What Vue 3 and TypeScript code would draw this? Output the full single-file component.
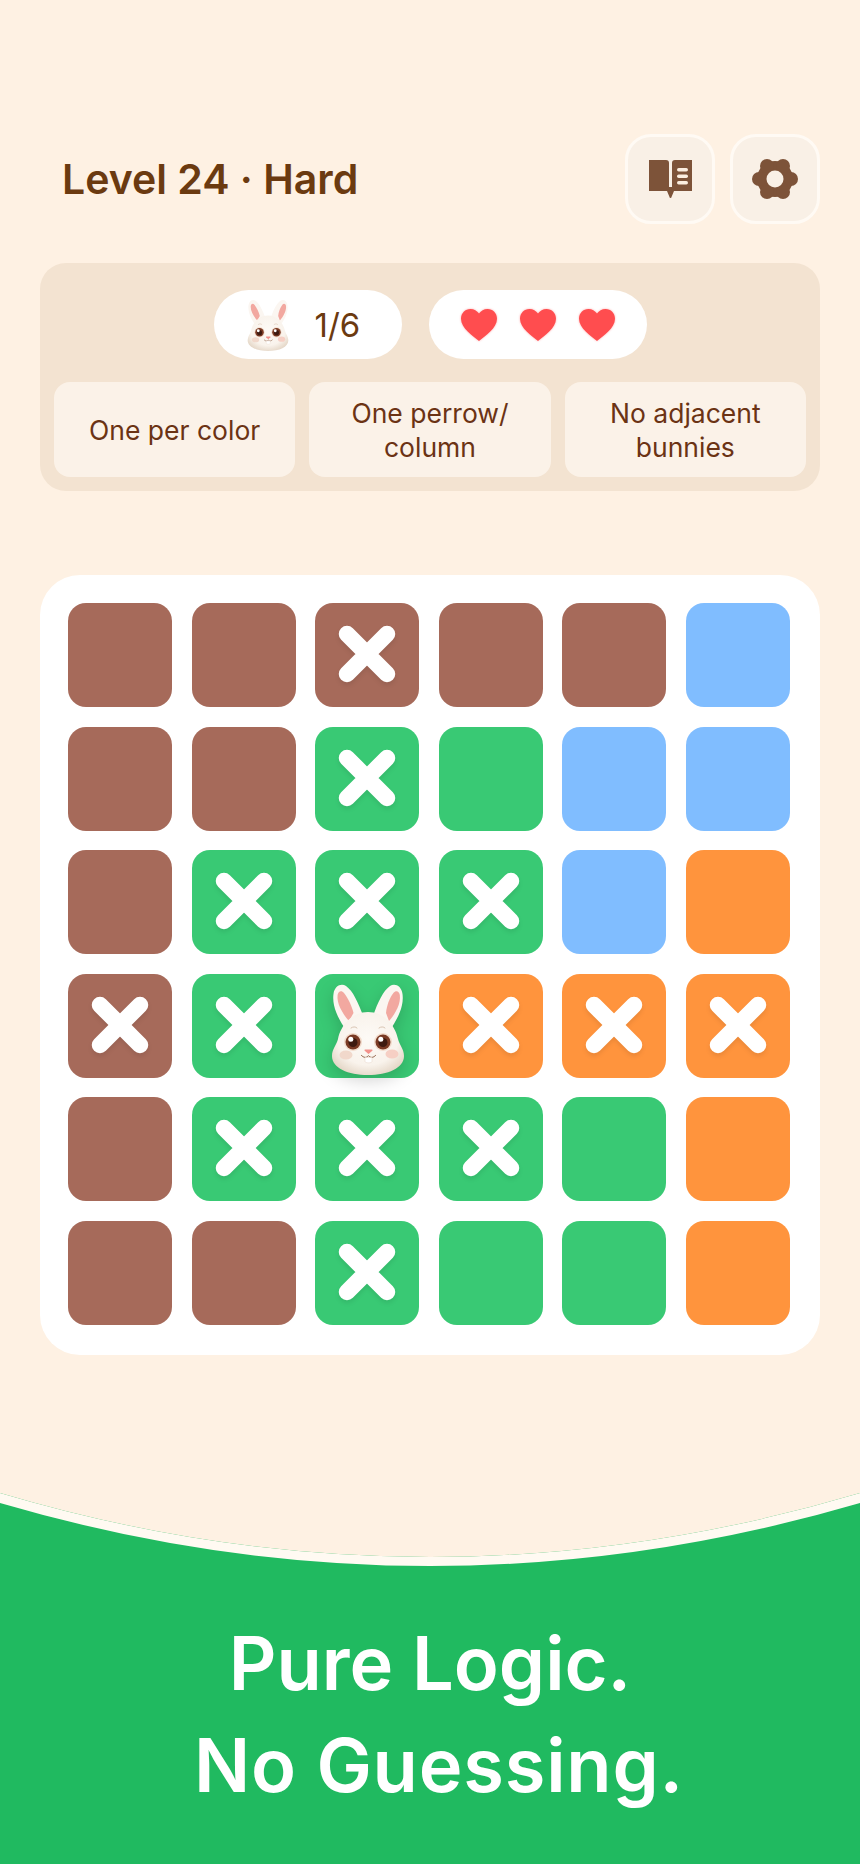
<script setup lang="ts">
type Cell = { c: string; m: string }
const layout = [
  ['b', 'b', 'bx', 'b', 'b', 'l'],
  ['b', 'b', 'gx', 'g', 'l', 'l'],
  ['b', 'gx', 'gx', 'gx', 'l', 'o'],
  ['bx', 'gx', 'gr', 'ox', 'ox', 'ox'],
  ['b', 'gx', 'gx', 'gx', 'g', 'o'],
  ['b', 'b', 'gx', 'g', 'g', 'o'],
]
const cells: Cell[] = layout.flat().map((s) => ({ c: s[0], m: s[1] ?? '' }))
const rules = ['One per color', 'One perrow/ column', 'No adjacent bunnies']
const lobes = [60, 120, 180, 240, 300, 360].map((a) => ({
  x: 23 + 16 * Math.cos((a * Math.PI) / 180),
  y: 22 + 15 * Math.sin((a * Math.PI) / 180),
}))
</script>

<template>
  <main class="page">
    <svg width="0" height="0" class="defs" aria-hidden="true">
      <defs>
        <radialGradient id="fur" cx="50%" cy="42%" r="62%">
          <stop offset="0%" stop-color="#fdfaf6" />
          <stop offset="68%" stop-color="#f9f3ec" />
          <stop offset="100%" stop-color="#e4d6c6" />
        </radialGradient>
        <symbol id="bunny" viewBox="0 0 72 92">
          <path d="M12 44C5 33 0 22 1.500 11 2.500 3 9 0 14 3c7 5 12 16 18 32z" fill="#fbf6f1" />
          <path d="M60 44c7-11 12-22 10.500-33C69.500 3 63 0 58 3c-7 5-12 16-17 30z" fill="#fbf6f1" />
          <path d="M17 38C10 30 4.500 20 5.600 12c.6-4 4-5 6.400-2 4 5 8 13 9.500 20z" fill="#f2a8a0" />
          <path d="M57 38c7-8 12-18 10.800-26-.6-4-4-5-6.400-2-4 5-6.800 13-7.400 20z" fill="#f2a8a0" />
          <path d="M36 29C20 29 9 42 6 56c-1.500 6-6 10-6 17 0 12 16 19 36 19s36-7 36-19c0-7-4.500-11-6-17C63 42 52 29 36 29z" fill="url(#fur)" />
          <path d="M19 45c2-1.500 4.500-1.500 6 0M47 45c2-1.500 4.500-1.500 6 0" fill="none" stroke="#d9c4b2" stroke-width="1" stroke-linecap="round" />
          <ellipse cx="14" cy="72" rx="6.500" ry="4.500" fill="#f1d8cb" />
          <ellipse cx="60" cy="71" rx="6.500" ry="4.500" fill="#f6cfc4" />
          <circle cx="21" cy="59" r="9" fill="#f2dccd" />
          <circle cx="51" cy="59" r="9" fill="#f2dccd" />
          <circle cx="21" cy="59" r="7.500" fill="#7a3a24" />
          <circle cx="51" cy="59" r="7.500" fill="#7a3a24" />
          <circle cx="21" cy="59.500" r="4.500" fill="#3e1a10" />
          <circle cx="51" cy="59.500" r="4.500" fill="#3e1a10" />
          <circle cx="18.800" cy="56.200" r="2.500" fill="#fff" />
          <circle cx="48.800" cy="56.200" r="2.500" fill="#fff" />
          <path d="M33 66.500h7c.6 0 .7.800.3 1.200L36.500 71l-3.800-3.300c-.4-.4-.3-1.200.3-1.200z" fill="#f2918c" />
          <path d="M29.500 72.500c2.500 2.500 5 2.500 7 .2 2 2.300 4.500 2.300 7-.2" fill="none" stroke="#8a5a42" stroke-width="1" stroke-linecap="round" />
          <path d="M33 74.500h7v4c0 1.800-7 1.800-7 0z" fill="#fff" stroke="#e7d5c6" stroke-width=".5" />
        </symbol>
        <symbol id="heart" viewBox="0 0 36 32">
          <path d="M18 32C12 27 0 19.500 0 9.800 0 4 4.200 0 9.500 0 13 0 16 2 18 4.500 20 2 23 0 26.500 0 31.800 0 36 4 36 9.800 36 19.500 24 27 18 32z" fill="#ff4d4f" />
        </symbol>
      </defs>
    </svg>

    <header class="top">
      <h1>Level 24 · Hard</h1>
      <div class="buttons">
        <button class="icon-btn" aria-label="Rules">
          <svg width="43" height="38" viewBox="0 0 43 38">
            <path d="M0 0h17c2 0 3 1 3 3v24h3V3c0-2 1-3 3-3h17v31H25l-2.500 6a1 1 0 0 1-2 0L18 31H0z" fill="#7d5339" />
            <rect x="28" y="8" width="11" height="3.500" rx="1.700" fill="#fbeee0" />
            <rect x="28" y="14.500" width="11" height="3.500" rx="1.700" fill="#fbeee0" />
            <rect x="28" y="21" width="11" height="3.500" rx="1.700" fill="#fbeee0" />
          </svg>
        </button>
        <button class="icon-btn" aria-label="Settings">
          <svg width="46" height="44" viewBox="0 0 46 44">
            <circle cx="23" cy="22" r="18" fill="#7d5339" />
            <circle v-for="(l, i) in lobes" :key="i" :cx="l.x" :cy="l.y" r="7" fill="#7d5339" />
            <circle cx="23" cy="22" r="8.500" fill="#f9f0e6" />
          </svg>
        </button>
      </div>
    </header>

    <section class="panel">
      <div class="pills">
        <div class="pill score">
          <svg class="mini" width="42" height="52"><use href="#bunny" /></svg>
          <span>1/6</span>
        </div>
        <div class="pill lives">
          <svg v-for="n in 3" :key="n" class="heart" width="36" height="32"><use href="#heart" /></svg>
        </div>
      </div>
      <div class="rules">
        <div v-for="r in rules" :key="r" class="rule">{{ r }}</div>
      </div>
    </section>

    <section class="board">
      <div v-for="(cell, i) in cells" :key="i" class="cell" :class="'c-' + cell.c">
        <svg v-if="cell.m === 'x'" class="x" width="60" height="60" viewBox="0 0 60 60">
          <path d="M10 10l40 40M50 10L10 50" stroke="#fff" stroke-width="16.500" stroke-linecap="round" />
        </svg>
        <svg v-else-if="cell.m === 'r'" class="rabbit" width="72" height="92"><use href="#bunny" /></svg>
      </div>
    </section>

    <footer class="foot">
      <svg class="curve" width="860" height="90" viewBox="0 0 860 90">
        <path d="M0 0Q430 128 860 0V10Q430 136 0 10z" fill="#fffaf2" />
        <path d="M0 0Q430 128 860 0z" fill="#fef1e3" />
      </svg>
      <p><span class="l1">Pure Logic.</span><span class="l2">No Guessing.</span></p>
    </footer>
  </main>
</template>

<style scoped>
.page {
  width: 860px;
  height: 1864px;
  background: #fef1e3;
  font-family: Inter, "Open Sans", sans-serif;
  color: #6b3a10;
  display: flex;
  flex-direction: column;
  overflow: hidden;
}
.defs {
  position: absolute;
}
.top {
  display: flex;
  justify-content: space-between;
  align-items: center;
  margin: 134px 40px 0 62px;
}
h1 {
  margin: 0;
  font-size: 41px;
  font-weight: 600;
  color: #6b3a10;
}
.buttons {
  display: flex;
  gap: 15px;
}
.icon-btn {
  width: 90px;
  height: 90px;
  padding: 0;
  border: 3px solid #fffaf4;
  border-radius: 26px;
  background: #f9f0e6;
  display: flex;
  align-items: center;
  justify-content: center;
}
.panel {
  margin: 39px 40px 0;
  padding: 27px 14px 14px;
  background: #f3e3d1;
  border-radius: 26px;
}
.pills {
  display: flex;
  justify-content: center;
  gap: 27px;
}
.pill {
  height: 69px;
  border-radius: 35px;
  background: #fff;
  display: flex;
  align-items: center;
}
.score {
  width: 188px;
  padding-left: 33px;
  gap: 26px;
  box-sizing: border-box;
  font-size: 33px;
}
.lives {
  width: 218px;
  box-sizing: border-box;
  padding-left: 32px;
  gap: 23px;
}
.heart {
  filter: drop-shadow(0 0 1px rgba(255, 77, 79, 0.45));
}
.rules {
  display: grid;
  grid-template-columns: repeat(3, 1fr);
  gap: 14px;
  margin-top: 23px;
}
.rule {
  height: 95px;
  padding: 0 20px;
  box-sizing: border-box;
  border-radius: 16px;
  background: #fbf2e8;
  display: flex;
  align-items: center;
  justify-content: center;
  text-align: center;
  font-size: 26.5px;
  line-height: 34px;
  color: #6b3314;
}
.board {
  margin: 84px 40px 0;
  padding: 28px 28px 30px;
  background: #fff;
  border-radius: 40px;
  display: grid;
  grid-template-columns: repeat(6, 104px);
  grid-auto-rows: 104px;
  gap: 19.6px;
}
.cell {
  position: relative;
  border-radius: 18px;
  display: flex;
  align-items: center;
  justify-content: center;
}
.c-b { background: #a66a5a; }
.c-g { background: #39c974; }
.c-l { background: #80bdff; }
.c-o { background: #ff943d; }
.x {
  margin-bottom: 2px;
  filter: drop-shadow(0 3px 2px rgba(0, 0, 0, 0.08));
}
.rabbit {
  position: absolute;
  left: 17px;
  top: 9px;
  filter: drop-shadow(0 6px 8px rgba(0, 0, 0, 0.16));
}
.foot {
  position: relative;
  flex: 1;
  margin-top: 138px;
  background: #20ba60;
  text-align: center;
}
.curve {
  position: absolute;
  left: 0;
  top: 0;
  display: block;
}
.foot p {
  position: relative;
  margin: 0;
  padding-top: 119px;
  font-size: 74px;
  line-height: 102px;
  font-weight: 600;
  color: #fff;
}
.l1,
.l2 {
  display: block;
}
.l2 {
  margin-left: 18px;
  letter-spacing: 0.8px;
}
</style>
